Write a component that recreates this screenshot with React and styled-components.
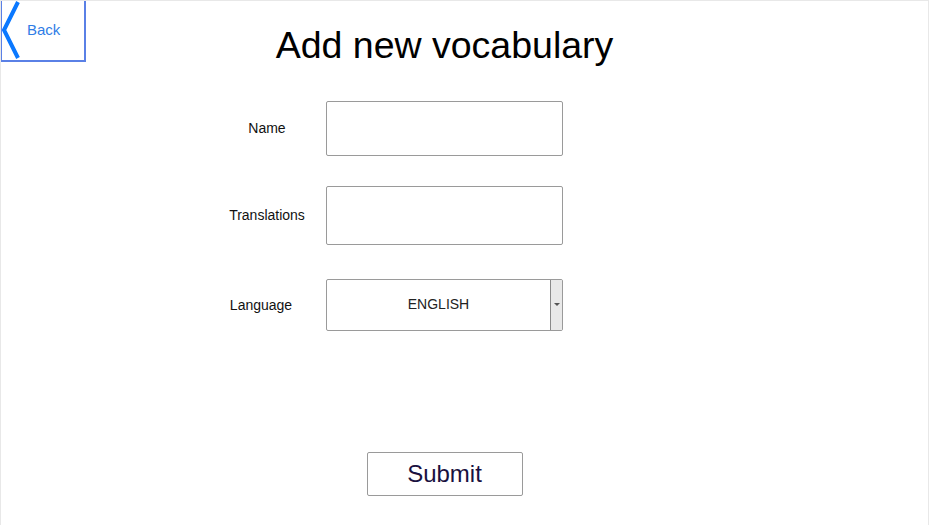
import React from 'react';
import styled, { createGlobalStyle } from 'styled-components';

const GlobalStyle = createGlobalStyle`
	* {
		box-sizing: border-box;
	}
	body {
		margin: 0;
		background: #ffffff;
		font-family: 'Liberation Sans', Arial, sans-serif;
	}
`;

const S = {
	Page: styled.div`
		width: 929px;
		height: 525px;
		border: 1px solid #e8e8e8;
		border-bottom: none;
		padding-right: 40px;
		display: flex;
		flex-direction: column;
		overflow: hidden;
	`,
	Header: styled.header`
		display: grid;
		grid-template-columns: 86px 1fr 86px;
		align-items: start;
	`,
	BackButton: styled.button`
		width: 86px;
		height: 62px;
		margin: -1px 0 0 -1px;
		padding: 0;
		display: flex;
		align-items: center;
		background: #ffffff;
		border: 2px solid #5a80e6;
		border-top: none;
		font-family: inherit;
		font-size: 15px;
		color: #2f7de6;
		cursor: pointer;
		svg {
			flex: none;
		}
		span {
			margin-left: 7px;
			margin-top: -1px;
		}
	`,
	Title: styled.h1`
		margin: 26px 0 0;
		font-size: 37.5px;
		line-height: 1;
		font-weight: 400;
		color: #000000;
		text-align: center;
	`,
	Form: styled.form`
		margin-top: 36px;
		display: flex;
		flex-direction: column;
	`,
	Row: styled.div`
		display: grid;
		grid-template-columns: 1fr 237px 1fr;
		align-items: center;
		margin-bottom: ${(props) => props.$gap || 0}px;
	`,
	Label: styled.label`
		justify-self: end;
		width: 118px;
		padding-right: ${(props) => props.$shift || 0}px;
		text-align: center;
		font-size: 14px;
		color: #111111;
	`,
	Input: styled.input`
		height: ${(props) => props.$height}px;
		width: 100%;
		border: 1px solid #9a9a9a;
		border-radius: 2px;
		font-family: inherit;
		font-size: 14px;
		padding: 0 8px;
		outline: none;
	`,
	Select: styled.div`
		height: 52px;
		display: flex;
		border: 1px solid #9a9a9a;
		border-radius: 2px;
		overflow: hidden;
	`,
	SelectValue: styled.div`
		flex: 1;
		display: flex;
		align-items: center;
		justify-content: center;
		font-size: 14px;
		color: #222222;
		padding-bottom: 2px;
	`,
	SelectArrow: styled.div`
		width: 12px;
		display: flex;
		align-items: center;
		justify-content: center;
		background: #e9e9e9;
		border-left: 1px solid #8a8a8a;
		&::after {
			content: '';
			border-left: 3px solid transparent;
			border-right: 3px solid transparent;
			border-top: 3px solid #555555;
		}
	`,
	Footer: styled.div`
		margin-top: 121px;
		display: flex;
		justify-content: center;
	`,
	Submit: styled.button`
		width: 156px;
		height: 44px;
		background: #ffffff;
		border: 1px solid #9a9a9a;
		border-radius: 2px;
		font-family: inherit;
		font-size: 24px;
		color: #1a1140;
		cursor: pointer;
	`
};

const Chevron = () => (
	<svg width="18" height="58" viewBox="0 0 18 58">
		<polyline points="16,1 2,29 16,57" fill="none" stroke="#0a78ff" strokeWidth="4" />
	</svg>
);

const App = () => (
	<>
		<GlobalStyle />
		<S.Page>
			<S.Header>
				<S.BackButton type="button">
					<Chevron />
					<span>Back</span>
				</S.BackButton>
				<S.Title>Add new vocabulary</S.Title>
			</S.Header>
			<S.Form onSubmit={(e) => e.preventDefault()}>
				<S.Row $gap={30}>
					<S.Label>Name</S.Label>
					<S.Input $height={55} />
				</S.Row>
				<S.Row $gap={34}>
					<S.Label>Translations</S.Label>
					<S.Input $height={59} />
				</S.Row>
				<S.Row>
					<S.Label $shift={12}>Language</S.Label>
					<S.Select>
						<S.SelectValue>ENGLISH</S.SelectValue>
						<S.SelectArrow />
					</S.Select>
				</S.Row>
			</S.Form>
			<S.Footer>
				<S.Submit type="button">Submit</S.Submit>
			</S.Footer>
		</S.Page>
	</>
);

export default App;
